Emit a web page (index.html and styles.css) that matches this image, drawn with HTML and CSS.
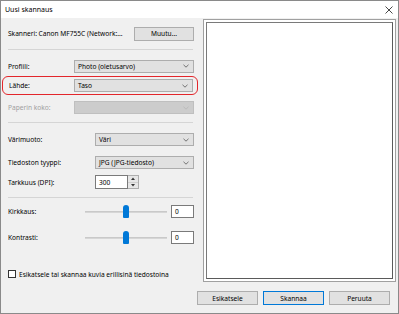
FILE: index.html
```html
<!DOCTYPE html>
<html lang="fi">
<head>
    <meta charset="UTF-8">
    <title>Uusi skannaus</title>
    <link rel="stylesheet" href="styles.css">
</head>
<body>
    <div class="window">
        <!-- Title bar -->
        <div class="titlebar">
            <span class="title">Uusi skannaus</span>
            <svg class="close" width="8" height="8" viewBox="0 0 8 8">
                <path d="M0.5 0.5 L7.5 7.5 M7.5 0.5 L0.5 7.5" stroke="#333" stroke-width="0.9" fill="none"/>
            </svg>
        </div>

        <div class="content">
            <!-- Settings -->
            <div class="left">
                <div class="row scanner-row">
                    <span class="scanner">Skanneri: Canon MF755C (Network:...</span>
                    <button class="btn change-btn">Muutu...</button>
                </div>

                <div class="sep sep-1"></div>

                <div class="row field-row profile-row">
                    <span class="label label-a">Profiili:</span>
                    <div class="select select-a">
                        <span>Photo (oletusarvo)</span>
                        <svg class="chev" width="6" height="4" viewBox="0 0 6 4"><polyline points="0.5,0.8 3,3.2 5.5,0.8" fill="none" stroke="#555" stroke-width="0.8"/></svg>
                    </div>
                </div>

                <div class="highlight">
                    <span class="label label-a">Lähde:</span>
                    <div class="select select-a">
                        <span>Taso</span>
                        <svg class="chev" width="6" height="4" viewBox="0 0 6 4"><polyline points="0.5,0.8 3,3.2 5.5,0.8" fill="none" stroke="#555" stroke-width="0.8"/></svg>
                    </div>
                </div>

                <div class="row field-row paper-row">
                    <span class="label label-a disabled">Paperin koko:</span>
                    <div class="select select-a select-disabled">
                        <span></span>
                        <svg class="chev" width="6" height="4" viewBox="0 0 6 4"><polyline points="0.5,0.8 3,3.2 5.5,0.8" fill="none" stroke="#b5b5b5" stroke-width="0.8"/></svg>
                    </div>
                </div>

                <div class="sep sep-2"></div>

                <div class="row field-row color-row">
                    <span class="label label-b">Värimuoto:</span>
                    <div class="select select-b">
                        <span>Väri</span>
                        <svg class="chev" width="6" height="4" viewBox="0 0 6 4"><polyline points="0.5,0.8 3,3.2 5.5,0.8" fill="none" stroke="#555" stroke-width="0.8"/></svg>
                    </div>
                </div>

                <div class="row field-row type-row">
                    <span class="label label-b">Tiedoston tyyppi:</span>
                    <div class="select select-b">
                        <span>JPG (JPG-tiedosto)</span>
                        <svg class="chev" width="6" height="4" viewBox="0 0 6 4"><polyline points="0.5,0.8 3,3.2 5.5,0.8" fill="none" stroke="#555" stroke-width="0.8"/></svg>
                    </div>
                </div>

                <div class="row field-row dpi-row">
                    <span class="label label-b">Tarkkuus (DPI):</span>
                    <div class="spin">
                        <span class="spin-value">300</span>
                        <div class="spin-btns">
                            <div class="spin-btn"><svg width="4" height="3" viewBox="0 0 4 3"><polygon points="0,3 2,0.5 4,3" fill="#333"/></svg></div>
                            <div class="spin-btn"><svg width="4" height="3" viewBox="0 0 4 3"><polygon points="0,0 2,2.5 4,0" fill="#333"/></svg></div>
                        </div>
                    </div>
                </div>

                <div class="sep sep-3"></div>

                <div class="row field-row bright-row">
                    <span class="label label-c">Kirkkaus:</span>
                    <div class="slider">
                        <div class="track"></div>
                        <div class="thumb"></div>
                    </div>
                    <div class="num">0</div>
                </div>

                <div class="row field-row contrast-row">
                    <span class="label label-c">Kontrasti:</span>
                    <div class="slider">
                        <div class="track"></div>
                        <div class="thumb"></div>
                    </div>
                    <div class="num">0</div>
                </div>

                <div class="row check-row">
                    <span class="checkbox"></span>
                    <span>Esikatsele tai skannaa kuvia erillisinä tiedostoina</span>
                </div>
            </div>

            <!-- Preview -->
            <div class="right">
                <div class="preview">
                    <div class="preview-inner"></div>
                </div>
                <div class="buttons">
                    <button class="btn">Esikatsele</button>
                    <button class="btn btn-default">Skannaa</button>
                    <button class="btn">Peruuta</button>
                </div>
            </div>
        </div>
    </div>
</body>
</html>
```

FILE: styles.css
```css
* {
    margin: 0;
    padding: 0;
    box-sizing: border-box;
}

body {
    font-family: "Noto Sans", "DejaVu Sans", sans-serif;
    font-size: 6.6px;
    color: #000;
    background-color: #fff;
}

.window {
    width: 399px;
    height: 314px;
    border: 1px solid #8a8a8a;
    display: flex;
    flex-direction: column;
    background-color: #f0f0f0;
    white-space: nowrap;
}

/* Title bar */
.titlebar {
    height: 17px;
    background-color: #fff;
    display: flex;
    align-items: center;
    justify-content: space-between;
    padding: 0 5px 0 4px;
}

.title {
    font-size: 7px;
}

.close {
    display: block;
}

.content {
    flex: 1;
    display: flex;
}

/* Left panel */
.left {
    width: 196px;
    padding: 0 3px 0 7px;
    display: flex;
    flex-direction: column;
}

.row {
    display: flex;
    align-items: center;
}

.scanner-row {
    margin-top: 8px;
    height: 15px;
    justify-content: space-between;
}

.btn {
    font-family: inherit;
    font-size: 6.6px;
    color: #000;
    background-color: #e1e1e1;
    border: 1px solid #adadad;
    height: 14px;
    cursor: pointer;
}

.change-btn {
    width: 60px;
}

.sep {
    height: 1px;
    background-color: #d5d5d5;
    margin-right: 1px;
}

.sep-1 { margin-top: 8px; }
.sep-2 { margin-top: 8px; }
.sep-3 { margin-top: 8px; }

.field-row {
    height: 13px;
}

.profile-row { margin-top: 9px; height: 14px; }
.paper-row { margin-top: 6px; }
.color-row { margin-top: 10px; }
.type-row { margin-top: 10px; }
.dpi-row { margin-top: 6px; height: 14px; }
.bright-row { margin-top: 7px; }
.contrast-row { margin-top: 13px; }

.label {
    flex-shrink: 0;
}

.label-a { width: 66px; }
.label-b { width: 87px; }
.label-c { width: 77px; }

.disabled {
    color: #a0a0a0;
}

.highlight {
    display: flex;
    align-items: center;
    height: 19px;
    margin: 3px -4px 0 -6px;
    padding: 0 4px 0 6px;
    border: 1px solid #e3262b;
    border-radius: 6px;
}

.highlight .label-a {
    width: 65px;
}

.select {
    flex: 1;
    height: 13px;
    display: flex;
    align-items: center;
    justify-content: space-between;
    padding: 0 4px 0 3px;
    background-color: #e1e1e1;
    border: 1px solid #adadad;
}

.select-disabled {
    background-color: #cccccc;
    border-color: #bfbfbf;
}

.chev {
    display: block;
}

.spin {
    display: flex;
    height: 14px;
}

.spin-value {
    width: 33px;
    background-color: #fff;
    border: 1px solid #7a7a7a;
    padding-left: 3px;
    display: flex;
    align-items: center;
}

.spin-btns {
    width: 11px;
    display: flex;
    flex-direction: column;
    border: 1px solid #adadad;
    border-left: none;
    background-color: #f0f0f0;
}

.spin-btn {
    flex: 1;
    display: flex;
    align-items: center;
    justify-content: center;
    background-color: #e6e6e6;
}

.spin-btn + .spin-btn {
    border-top: 1px solid #cfcfcf;
}

.spin-btn svg {
    display: block;
}

/* Sliders */
.slider {
    position: relative;
    width: 82px;
    height: 13px;
    display: flex;
    align-items: center;
}

.track {
    width: 100%;
    height: 2px;
    background-color: #d6d6d6;
    border-top: 1px solid #c9c9c9;
}

.thumb {
    position: absolute;
    left: 38px;
    top: 0;
    width: 6px;
    height: 13px;
    background-color: #0078d7;
    border-radius: 3px 3px 1px 1px;
}

.num {
    width: 23px;
    height: 13px;
    margin-left: 4px;
    background-color: #fff;
    border: 1px solid #7a7a7a;
    padding-left: 3px;
    display: flex;
    align-items: center;
}

.check-row {
    margin-top: 24px;
    height: 12px;
}

.checkbox {
    width: 8px;
    height: 8px;
    border: 1px solid #333;
    background-color: #fff;
    margin: 0 3px 0 0;
}

/* Right panel */
.right {
    flex: 1;
    display: flex;
    flex-direction: column;
    padding-right: 1px;
}

.preview {
    margin: 1px 1px 0 6px;
    height: 263px;
    background-color: #fff;
    border: 1px solid #a0a0a0;
    padding: 2px;
}

.preview-inner {
    height: 100%;
    border: 1px solid #7a7a7a;
    border-right-color: #5a5a5a;
    border-bottom-color: #5a5a5a;
}

.buttons {
    margin-top: 9px;
    display: flex;
    gap: 5px;
}

.buttons .btn {
    width: 61px;
}

.btn-default {
    border-color: #0078d7;
}
```
